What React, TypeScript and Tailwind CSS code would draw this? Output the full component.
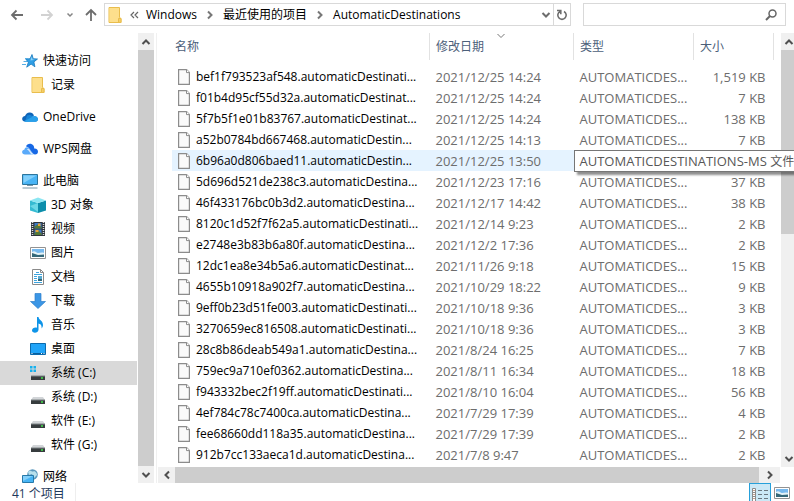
import type { ReactNode } from "react";

type Place = {
  label: string;
  icon: ReactNode;
  child?: boolean;
  active?: boolean;
};

type FileRow = { name: string; date: string; size: string };

const files: FileRow[] = [
  { name: "bef1f793523af548.automaticDestinati...", date: "2021/12/25 14:24", size: "1,519 KB" },
  { name: "f01b4d95cf55d32a.automaticDestinat...", date: "2021/12/25 14:24", size: "7 KB" },
  { name: "5f7b5f1e01b83767.automaticDestinat...", date: "2021/12/25 14:24", size: "138 KB" },
  { name: "a52b0784bd667468.automaticDestin...", date: "2021/12/25 14:13", size: "7 KB" },
  { name: "6b96a0d806baed11.automaticDestin...", date: "2021/12/25 13:50", size: "" },
  { name: "5d696d521de238c3.automaticDestina...", date: "2021/12/23 17:16", size: "37 KB" },
  { name: "46f433176bc0b3d2.automaticDestina...", date: "2021/12/17 14:42", size: "38 KB" },
  { name: "8120c1d52f7f62a5.automaticDestinati...", date: "2021/12/14 9:23", size: "2 KB" },
  { name: "e2748e3b83b6a80f.automaticDestina...", date: "2021/12/2 17:36", size: "2 KB" },
  { name: "12dc1ea8e34b5a6.automaticDestinat...", date: "2021/11/26 9:18", size: "15 KB" },
  { name: "4655b10918a902f7.automaticDestina...", date: "2021/10/29 18:22", size: "9 KB" },
  { name: "9eff0b23d51fe003.automaticDestinati...", date: "2021/10/18 9:36", size: "3 KB" },
  { name: "3270659ec816508.automaticDestinati...", date: "2021/10/18 9:36", size: "3 KB" },
  { name: "28c8b86deab549a1.automaticDestina...", date: "2021/8/24 16:25", size: "7 KB" },
  { name: "759ec9a710ef0362.automaticDestina...", date: "2021/8/11 16:34", size: "18 KB" },
  { name: "f943332bec2f19ff.automaticDestinati...", date: "2021/8/10 16:04", size: "56 KB" },
  { name: "4ef784c78c7400ca.automaticDestina...", date: "2021/7/29 17:39", size: "4 KB" },
  { name: "fee68660dd118a35.automaticDestina...", date: "2021/7/29 17:39", size: "2 KB" },
  { name: "912b7cc133aeca1d.automaticDestina...", date: "2021/7/8 9:47", size: "2 KB" },
];

function Chevron({ className = "", thin = false }: { className?: string; thin?: boolean }) {
  return (
    <svg viewBox="0 0 10 10" className={`size-2.5 shrink-0 ${className}`} fill="none" stroke="currentColor" strokeWidth={thin ? 1 : 2}>
      <path d="M1.5 3l3.5 3.5L8.5 3" />
    </svg>
  );
}

function FolderIcon() {
  return (
    <svg viewBox="0 0 16 16" className="size-4 shrink-0">
      <path d="M2 .5h10.500v10l1.500 1v4H2z" fill="#ffe08a" stroke="#e9bd4c" />
      <path d="M2.500 1h9.500v14H2.500z" fill="#fddf8c" />
      <path d="M11.500 15.500v-4h2.500v4z" fill="#f6cf68" stroke="#e9bd4c" />
    </svg>
  );
}

function FileIcon() {
  return (
    <svg viewBox="0 0 12 16" className="h-4 w-3 shrink-0">
      <path d="M.6.6h8l2.800 2.800v12H.6z" fill="#fafafa" stroke="#8c8c8c" strokeWidth="1.200" />
      <path d="M8.500.6v3h3" fill="#fff" stroke="#8c8c8c" />
    </svg>
  );
}

function StarIcon() {
  return (
    <svg viewBox="0 0 16 16" className="size-4 shrink-0">
      <path d="M10 1.500l1.200 4.200 4.300.3-3.600 2.900 1 4.900-3.800-2.700-4.400 3.100 1.600-4.800L3.800 6l4.300-.3z" fill="#2f9fe6" stroke="#1878bd" strokeWidth=".8" />
      <path d="M3 5.500h3M1.500 8.500h3.500M0 11.500h4" stroke="#56aee4" />
      <path d="M9.800 3.500l.8 3 2.600.3-4.800.8z" fill="#8fd4fa" />
    </svg>
  );
}

function OneDriveIcon() {
  return (
    <svg viewBox="0 0 16 16" className="size-4 shrink-0">
      <path d="M3 12.500C.8 12.400 0 11 .2 9.500.4 8 1.600 7 3 7c.8-2.200 2.500-3.800 5-3.600 1.800.1 3.200 1.200 4 3z" fill="#0f65b8" />
      <path d="M5 6.500c2-1 4.500-.5 6 1 3-.6 5 .7 5 2.700 0 1.500-1 2.500-2.500 2.500H3z" fill="#1684d8" />
      <path d="M2 12.300l9.500-5c1.500-.9 3.300.2 3.800 1.600 1.300.4.9 3.800-2 3.800H3.200z" fill="#29a0ea" />
    </svg>
  );
}

function WpsIcon() {
  return (
    <svg viewBox="0 0 16 16" className="size-4 shrink-0">
      <path d="M3 13.500c-3.500 0-4-4.300-.5-5 .3-2 2.500-3 4.500-1.500l4.500 6.500z" fill="#5aaafa" />
      <path d="M4 5.500c1-3.300 5.500-3.900 7.400-.9.700 1.100.8 2 .8 3 4.800-.4 5 5.900.8 5.900-3 0-4.500-5.500-7-7.200-.7-.5-1.400-.7-2-.8z" fill="#1768e5" />
      <path d="M6.500 7.500c1.500 1 2.500 4 5 6H9.500C8 12 7 9.500 4.800 8.300z" fill="#d5e8fd" />
    </svg>
  );
}

function ComputerIcon() {
  return (
    <svg viewBox="0 0 16 16" className="size-4 shrink-0">
      <path d="M.5 1.500h15v10H.5z" fill="#49b4f5" stroke="#2d759c" />
      <path d="M1.500 2.500h13L1.500 10z" fill="#83d0fb" />
      <path d="M5 12.500h6M.5 15h15" stroke="#7997a8" />
    </svg>
  );
}

function CubeIcon() {
  return (
    <svg viewBox="0 0 16 16" className="size-4 shrink-0">
      <path d="M0 3.500L8 6v10l-8-2.500z" fill="#35bbd2" />
      <path d="M8 6l8-2.500v10L8 16z" fill="#0c8eab" />
      <path d="M0 3.500L8 .5l8 3L8 6z" fill="#8be6f2" />
      <path d="M0 9l8-3v9z" fill="#6bd8e6" />
    </svg>
  );
}

function VideoIcon() {
  return (
    <svg viewBox="0 0 16 16" className="size-4 shrink-0">
      <path d="M1 1h14v14H1z" fill="#30363c" />
      <path d="M2.500 1v14M13.500 1v14" stroke="#d9dde0" strokeWidth="1.500" strokeDasharray="1 1" />
      <path d="M4.500 2h7v5.500h-7zM4.500 8.500h7V14h-7z" fill="#3d79c9" />
      <path d="M4.500 5.500l3-2 4 2.500v1.500h-7zM4.500 12l4-2.500 3 3V14h-7z" fill="#557a38" />
      <path d="M8 2.500h2.500V5H8zM5.500 9h3v2h-3z" fill="#e9a536" />
    </svg>
  );
}

function PictureIcon() {
  return (
    <svg viewBox="0 0 16 16" className="size-4 shrink-0">
      <path d="M.5 2.500h15v11H.5z" fill="#fff" stroke="#929292" />
      <path d="M2 4h12v8H2z" fill="#77b9ee" />
      <path d="M2 7c3-2 4 1 6 1s4-1 6 0v4H2z" fill="#e4f3f8" />
      <path d="M2 8l6 2 6-.5V12H2z" fill="#356879" />
    </svg>
  );
}

function DocumentIcon() {
  return (
    <svg viewBox="0 0 16 16" className="size-4 shrink-0">
      <path d="M2.500.5h8l3 3v12h-11z" fill="#fff" stroke="#8a8a8a" />
      <path d="M10.500.5v3h3" fill="none" stroke="#8a8a8a" />
      <path d="M6 3.500h3M4 5.500h8M4 7.500h3M4 9.500h3M4 11.500h3M4 13.500h8" stroke="#3ca4df" />
      <path d="M8 7h4v5H8z" fill="#58a9cf" />
      <path d="M8 10h4v2H8z" fill="#356879" />
    </svg>
  );
}

function DownloadIcon() {
  return (
    <svg viewBox="0 0 16 16" className="size-4 shrink-0">
      <path d="M5 .5h6v8h4.500L8 15.500.5 8.500H5z" fill="#3b96e5" stroke="#2e7fcb" strokeWidth=".7" />
    </svg>
  );
}

function MusicIcon() {
  return (
    <svg viewBox="0 0 16 16" className="size-4 shrink-0">
      <path d="M7 0h1.500c.3 3 4.500 3.500 4.500 8 0 1.500-.6 2.500-1.500 3.500C12 8 10.500 7 8.500 6.500v6.200C8.300 16.500 2 16.500 2 13.500c0-2 2.500-3.500 5-2.700z" fill="#0e94e8" />
    </svg>
  );
}

function DesktopIcon() {
  return (
    <svg viewBox="0 0 16 16" className="size-4 shrink-0">
      <path d="M.5 2.500h15v11H.5z" fill="#20a4f8" stroke="#0b6aad" />
      <path d="M1 12.500h14" stroke="#075e9c" />
      <path d="M1.500 12.500h1M11 12.500h1M13.500 12.500h1" stroke="#fff" />
    </svg>
  );
}

function DriveIcon({ system = false }: { system?: boolean }) {
  return (
    <svg viewBox="0 0 16 16" className="size-4 shrink-0">
      {system && <path d="M0 1h2.500v2.500H0zM3.500 1H6v2.500H3.500zM0 4.500h2.500V7H0zM3.500 4.500H6V7H3.500z" fill="#16b1ee" />}
      <path d="M3 8h10l2 3H1z" fill="#d2d5d8" />
      <path d="M1 11h14v4H1z" fill="#373c3e" />
      <path d="M1 11h14" stroke="#7d8285" />
      <path d="M11 13h2" stroke="#43e34d" strokeWidth="1.500" />
    </svg>
  );
}

function NetworkIcon() {
  return (
    <svg viewBox="0 0 16 16" className="size-4 shrink-0">
      <circle cx="10.500" cy="5.500" r="5.300" fill="#5b98bd" />
      <path d="M6 3c3-3 4 1 6-1 2 1 3 2 3 4l-3 3-2-4-3 1z" fill="#b8e0ec" />
      <path d="M.5 6.500h11v7H.5z" fill="#47b4f4" stroke="#2679a9" />
      <path d="M1 7h10L1 12z" fill="#84d0fa" />
    </svg>
  );
}

const places: Place[] = [
  { label: "快速访问", icon: <StarIcon /> },
  { label: "记录", icon: <FolderIcon />, child: true },
  { label: "OneDrive", icon: <OneDriveIcon /> },
  { label: "WPS网盘", icon: <WpsIcon /> },
  { label: "此电脑", icon: <ComputerIcon /> },
  { label: "3D 对象", icon: <CubeIcon />, child: true },
  { label: "视频", icon: <VideoIcon />, child: true },
  { label: "图片", icon: <PictureIcon />, child: true },
  { label: "文档", icon: <DocumentIcon />, child: true },
  { label: "下载", icon: <DownloadIcon />, child: true },
  { label: "音乐", icon: <MusicIcon />, child: true },
  { label: "桌面", icon: <DesktopIcon />, child: true },
  { label: "系统 (C:)", icon: <DriveIcon system />, child: true, active: true },
  { label: "系统 (D:)", icon: <DriveIcon />, child: true },
  { label: "软件 (E:)", icon: <DriveIcon />, child: true },
  { label: "软件 (G:)", icon: <DriveIcon />, child: true },
  { label: "网络", icon: <NetworkIcon /> },
];

function VerticalScrollbar({ thumb }: { thumb: string }) {
  return (
    <div className="flex w-4 shrink-0 flex-col bg-[#f0f0f0] text-[#505050]">
      <button aria-label="向上滚动" className="flex h-[17px] items-center justify-center">
        <Chevron className="rotate-180" />
      </button>
      <div className="min-h-0 flex-1">
        <div className={`bg-[#cdcdcd] ${thumb}`} />
      </div>
      <button aria-label="向下滚动" className="flex h-[17px] items-center justify-center">
        <Chevron />
      </button>
    </div>
  );
}

function AddressBar() {
  return (
    <header className="flex h-[33px] shrink-0 items-start pt-[3px] pr-2 text-[#6d6d6d]">
      <nav className="flex h-[23px] w-[104px] shrink-0 items-center pl-2.5">
        <button aria-label="后退" className="w-[30px]">
          <svg viewBox="0 0 14 12" className="h-3 w-3.5" fill="none" stroke="currentColor" strokeWidth="1.800">
            <path d="M13 6H2M6.500 1.500L2 6l4.500 4.500" />
          </svg>
        </button>
        <button aria-label="前进" className="w-[26px] text-[#d2d2d2]">
          <svg viewBox="0 0 14 12" className="h-3 w-3.5" fill="none" stroke="currentColor" strokeWidth="1.800">
            <path d="M1 6h11M7.500 1.500L12 6l-4.500 4.500" />
          </svg>
        </button>
        <button aria-label="最近浏览的位置" className="w-[18px]">
          <svg viewBox="0 0 8 8" className="size-2" fill="none" stroke="#858585" strokeWidth="1.500">
            <path d="M1.500 2.500L4 5l2.500-2.500" />
          </svg>
        </button>
        <button aria-label="上移一级">
          <svg viewBox="0 0 14 14" className="size-3.5" fill="none" stroke="currentColor" strokeWidth="1.800">
            <path d="M7 13V2M2 7l5-5 5 5" />
          </svg>
        </button>
      </nav>
      <div className="flex h-[23px] min-w-0 flex-1 items-center border border-[#d9d9d9] pl-0.5 text-black">
        <FolderIcon />
        <svg viewBox="0 0 10 10" className="mr-1.5 ml-[7px] size-2.5" fill="none" stroke="#666" strokeWidth="1.200">
          <path d="M4 2L1 5l3 3M8 2L5 5l3 3" />
        </svg>
        <a href="#windows">Windows</a>
        <Chevron className="mx-2 -rotate-90 text-[#777]" />
        <a href="#recent">最近使用的项目</a>
        <Chevron className="mx-2 -rotate-90 text-[#777]" />
        <a href="#destinations">AutomaticDestinations</a>
        <button aria-label="以前的位置" className="ml-auto px-0.5 text-[#6d6d6d]">
          <Chevron />
        </button>
        <button aria-label="刷新" className="flex h-full w-[17px] items-center justify-center border-l border-[#d9d9d9]">
          <svg viewBox="0 0 12 12" className="size-3" fill="none" stroke="#6d6d6d" strokeWidth="1.600">
            <path d="M4 2.500A4.200 4.200 0 1 0 8 2.500M1 1.500h3.800v3.800" />
          </svg>
        </button>
      </div>
      <label className="ml-3 flex h-[23px] w-[203px] shrink-0 items-center border border-[#d9d9d9] pr-2">
        <input aria-label="搜索" className="min-w-0 flex-1 outline-none" />
        <svg viewBox="0 0 12 12" className="size-3" fill="none" stroke="#666" strokeWidth="1.500">
          <circle cx="7.500" cy="4.500" r="3.500" />
          <path d="M5 7L1 11" strokeWidth="2" />
        </svg>
      </label>
    </header>
  );
}

function Sidebar() {
  return (
    <aside className="flex w-[154px] shrink-0">
      <ul className="min-w-0 flex-1 pt-4 pr-px">
        {places.map((place, i) => (
          <li key={place.label} className={i > 0 && !place.child ? "mt-2" : ""}>
            <a
              href="#place"
              className={`flex h-6 items-center gap-[5px] leading-none ${place.child ? "pl-[30px]" : "pl-[22px]"} ${place.active ? "bg-[#d9d9d9]" : ""}`}
            >
              {place.icon}
              <span>{place.label}</span>
            </a>
          </li>
        ))}
      </ul>
      <VerticalScrollbar thumb="h-full" />
    </aside>
  );
}

function FileTable() {
  return (
    <div className="min-h-0 flex-1 pr-[7px] pl-[15px]">
      <table className="w-full table-fixed border-collapse text-left">
        <colgroup>
          <col />
          <col className="w-36" />
          <col className="w-[120px]" />
          <col className="w-20" />
        </colgroup>
        <thead>
          <tr className="h-[27px] text-[#4c607a] [&>th]:border-r [&>th]:border-[#e2e2e2] [&>th]:py-0 [&>th]:font-normal">
            <th className="pl-[3px]">名称</th>
            <th className="relative pl-1.5">
              修改日期
              <Chevron thin className="absolute -top-0.5 left-[66px] text-[#777]" />
            </th>
            <th className="pl-1.5">类型</th>
            <th className="pl-1.5">大小</th>
          </tr>
        </thead>
        <tbody className="text-[13px] whitespace-nowrap text-[#6d6d6d]">
          <tr className="h-1.5" aria-hidden="true" />
          {files.map((file, i) => (
            <tr key={file.name} className={`h-[21px] leading-5 [&>td]:py-0 ${i === 4 ? "bg-[#e5f3ff]" : ""}`}>
              <td className="pl-1.5">
                <div className="flex items-center gap-1.5 text-xs text-black">
                  <FileIcon />
                  <span>{file.name}</span>
                </div>
              </td>
              <td className="pl-1.5">{file.date}</td>
              <td className="relative pl-1.5">
                {i === 4 ? (
                  <div role="tooltip" className="absolute top-0 left-0 z-10 border border-[#767676] bg-white pr-2 pl-[5px] text-[#575757] shadow-[3px_3px_2px_#00000070]">
                    AUTOMATICDESTINATIONS-MS <span className="text-xs">文件</span>
                  </div>
                ) : (
                  "AUTOMATICDES..."
                )}
              </td>
              <td className="pr-2 text-right">{file.size}</td>
            </tr>
          ))}
        </tbody>
      </table>
    </div>
  );
}

function StatusBar() {
  return (
    <footer className="flex h-[18px] shrink-0 items-start overflow-hidden pr-px pl-3 text-[#1e395b]">
      <span className="border-r border-[#eee] pt-[3px] pr-2.5 leading-[15px]">41 个项目</span>
      <button aria-label="详细信息" className="ml-auto flex h-6 w-[22px] shrink-0 justify-center border border-[#26a0da] bg-[#cbe8f6] pt-1">
        <svg viewBox="0 0 18 14" className="h-3.5 w-[18px]" fill="none">
          <path d="M1.500.5h3v13h-3zM1.500 4.500h3M1.500 8.500h3" fill="#fff" stroke="#8b8b8b" />
          <path d="M7 2.500h4M13 2.500h4M7 6.500h4M13 6.500h4M7 10.500h4M13 10.500h4" stroke="#6b7780" />
          <path d="M2.500 2.500h1M2.500 6.500h1M2.500 10.500h1" stroke="#884422" />
        </svg>
      </button>
      <button aria-label="大图标" className="flex w-[22px] shrink-0 justify-center pt-0.5">
        <PictureIcon />
      </button>
    </footer>
  );
}

export default function App() {
  return (
    <div className="flex h-screen flex-col overflow-hidden bg-white font-['Open_Sans','Noto_Sans_CJK_SC',sans-serif] text-xs text-black">
      <AddressBar />
      <div className="flex min-h-0 flex-1">
        <Sidebar />
        <main className="ml-0.5 flex min-w-0 flex-1 flex-col border-l border-[#f0f0f0]">
          <div className="flex min-h-0 flex-1">
            <div className="min-w-0 flex-1">
              <FileTable />
            </div>
            <div className="-mr-[3px] flex shrink-0">
              <VerticalScrollbar thumb="h-[46%]" />
            </div>
          </div>
          <div className="mr-3.5 ml-px flex h-4 shrink-0 bg-[#f0f0f0] text-[#505050]">
            <button aria-label="向左滚动" className="flex w-[17px] items-center justify-center">
              <Chevron className="rotate-90" />
            </button>
            <div className="flex-1 bg-[#cdcdcd]" />
            <button aria-label="向右滚动" className="flex w-[21px] items-center justify-center">
              <Chevron className="-rotate-90" />
            </button>
          </div>
        </main>
      </div>
      <StatusBar />
    </div>
  );
}
